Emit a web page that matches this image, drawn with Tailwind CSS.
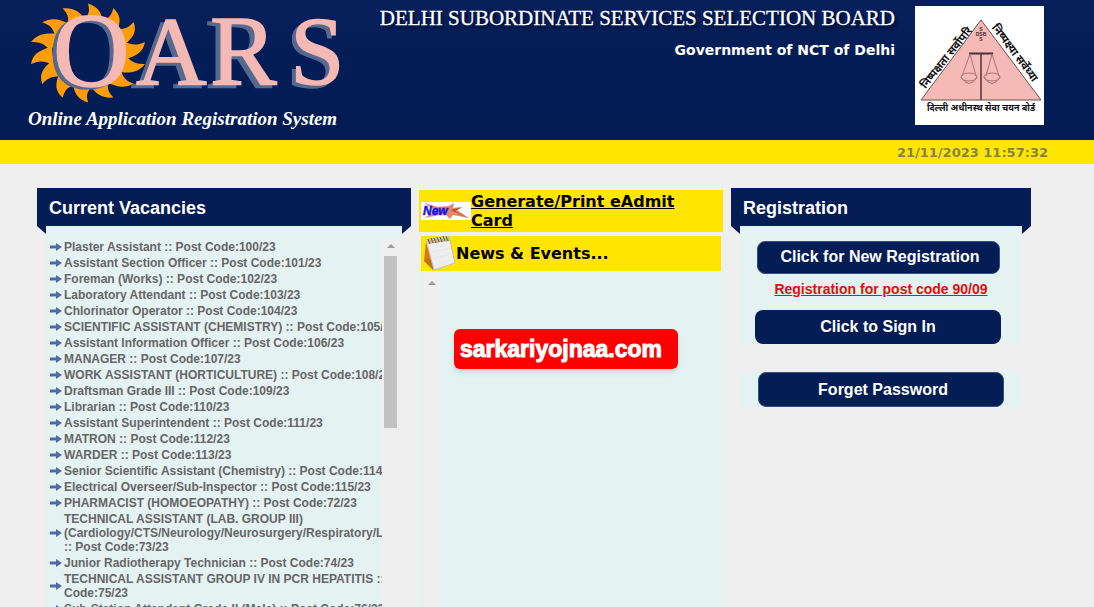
<!DOCTYPE html>
<html lang="en">
<head>
  <meta charset="UTF-8" />
  <meta name="viewport" content="width=device-width, initial-scale=1.0"/>
  <title>OARS - Delhi Subordinate Services Selection Board</title>
  <script src="https://cdn.jsdelivr.net/npm/@tailwindcss/browser@4"></script>
</head>
<body class="bg-[#efefef] font-['Liberation_Sans',sans-serif] h-screen overflow-hidden flex flex-col">

  <header class="shrink-0 h-[140px] bg-linear-to-b from-[#071f5a] to-[#021b53] text-white flex justify-between pr-[50px]">
    <div class="shrink-0">
      <svg class="block" width="360" height="107" viewBox="0 0 360 107" role="img" aria-label="OARS">
        <defs>
          <path id="ray" d="M-9 -30 C-6 -37 -3 -40 -7 -49 C2 -47 6 -42 9 -30 Z" />
        </defs>
        <g id="sun" fill="#ff9c0a" transform="translate(88 53) scale(1.18 1)"></g>
        <ellipse cx="90" cy="53" rx="34" ry="32" fill="#051d57" />
        <g font-family="Liberation Serif, serif" font-size="98" stroke-width="1.5">
          <g fill="#56698f" stroke="#56698f">
            <text x="49" y="88" font-size="106">O</text>
            <text x="131" y="87">A</text>
            <text x="205" y="87" font-size="100">R</text>
            <text x="286" y="87">S</text>
          </g>
          <g fill="#f5b9b4" stroke="#f5b9b4">
            <text x="53" y="86" font-size="106">O</text>
            <text x="136" y="84">A</text>
            <text x="210" y="84" font-size="100">R</text>
            <text x="290" y="84">S</text>
          </g>
        </g>
      </svg>
      <p class="pl-7 font-['Liberation_Serif',serif] font-bold italic text-[19px] leading-6">Online Application Registration System</p>
    </div>
    <div class="flex gap-5">
      <div class="text-right whitespace-nowrap pt-1">
        <h1 class="font-['Liberation_Serif',serif] text-[21px] leading-7 text-shadow-[2px_3px_3px_#000a30] [-webkit-text-stroke:0.3px_white]">DELHI SUBORDINATE SERVICES SELECTION BOARD</h1>
        <p class="font-['DejaVu_Sans',sans-serif] font-bold text-sm leading-9">Government of NCT of Delhi</p>
      </div>
      <svg class="mt-1.5 shrink-0" width="129" height="119" viewBox="0 0 129 119" role="img" aria-label="DSSSB emblem">
        <rect width="129" height="119" fill="#fff" />
        <path d="M66 14 L6 94 H126 Z" fill="#f5b9b6" stroke="#6d4c4c" />
        <path d="M54 47.500 H78" stroke="#4b3333" stroke-width="2" />
        <path d="M66 47 V94" stroke="#4b3333" stroke-width="1.500" />
        <g fill="none" stroke="#a87777">
          <path d="M55 48 L47 70 M55 48 L61 70 M77 48 L71 70 M77 48 L84 70" />
          <ellipse cx="54" cy="71" rx="8" ry="4" />
          <ellipse cx="77" cy="71" rx="8" ry="4" />
          <path d="M46 71 Q54 84 62 71 M69 71 Q77 84 85 71" />
        </g>
        <g fill="#4b2a2a" font-family="Liberation Sans, sans-serif" font-size="5" font-weight="bold" text-anchor="middle">
          <text x="66" y="25">S</text>
          <text x="66" y="30">DSB</text>
          <text x="66" y="35">S</text>
        </g>
        <g fill="#111" font-family="Noto Sans, Noto Sans Devanagari, sans-serif" font-weight="bold" text-anchor="middle">
          <text font-size="11" transform="translate(34 54) rotate(-51)">निष्पक्षता सर्वोपरि</text>
          <text font-size="11" transform="translate(97 49) rotate(53)">निष्पक्ष्या सर्वेध्या</text>
          <text x="66" y="105" font-size="9">दिल्ली अधीनस्थ सेवा चयन बोर्ड</text>
        </g>
      </svg>
    </div>
  </header>

  <div class="shrink-0 h-6 bg-[#ffe600] text-right pr-[46px] font-['DejaVu_Sans',sans-serif] font-bold text-[13px] leading-[26px] text-[#858249]">
    <time>21/11/2023 11:57:32</time>
  </div>

  <main class="flex-1 min-h-0 flex gap-2 pt-6 pl-[37px] pr-[63px]">

    <section class="flex-[374] min-w-0 flex flex-col">
      <h2 class="shrink-0 h-[38px] bg-[#041d55] text-white font-bold text-lg leading-[40px] pl-3">Current Vacancies</h2>
      <div class="flex-1 min-h-0 flex">
        <svg class="shrink-0" width="9" height="8"><path d="M0 0 H9 V8 Z" fill="#041d55" /></svg>
        <div class="flex-1 min-w-0 bg-[#e4f2f2] pt-[13px] flex">
          <ul id="vacancies" class="flex-1 min-w-0 overflow-hidden pl-1 text-xs leading-[14px] font-bold text-[#666] whitespace-nowrap"></ul>
          <div class="w-5 bg-[#efefef] px-0.5 pt-[5px] flex flex-col items-start">
            <svg class="ml-[3px] shrink-0" width="8" height="4"><path d="M4 0 L8 4 H0 Z" fill="#9d9d9d" /></svg>
            <div class="mt-2 w-[13px] h-[172px] bg-[#c1c1c1]"></div>
          </div>
        </div>
        <svg class="shrink-0" width="9" height="8"><path d="M0 0 H9 L0 8 Z" fill="#041d55" /></svg>
      </div>
    </section>

    <section class="flex-[304] min-w-0 flex flex-col pt-0.5 font-['DejaVu_Sans',sans-serif] font-bold">
      <div class="shrink-0 h-[42px] bg-[#ffe600] flex items-center pl-0.5">
        <svg class="shrink-0" width="50" height="18" viewBox="0 0 50 18">
          <rect width="50" height="18" fill="#fff" />
          <path d="M3 1 L17 5 L28 4 L33 1 L32 6 L40 5 L36 8 L48 16 L32 13 L29 17 L24 12 L3 16 L15 9 Z" fill="#e48668" />
          <path d="M42 5 L30 8 L48 17 L34 9 Z" fill="#b9452b" />
          <text x="2" y="13" font-family="Liberation Sans, sans-serif" font-size="12" font-weight="bold" font-style="italic" fill="#1414e8" stroke="#1414e8" stroke-width="0.5">New</text>
        </svg>
        <a href="#" class="text-base leading-[19px] underline">Generate/Print eAdmit<br>Card</a>
      </div>
      <div class="shrink-0 mt-1 mx-0.5 h-[35px] bg-[#ffe600] flex items-center">
        <svg class="shrink-0" width="35" height="35" viewBox="0 0 35 35">
          <path d="M5 5 L3 25 L12 29 Z" fill="#d97a16" />
          <path d="M3 25 L12 34 L14 30 L8 22 Z" fill="#bb701c" />
          <path d="M5 4 L28 0 L34 27 L13 34 Z" fill="#eee" stroke="#c7bfae" />
          <path d="M6 4 L28 1 L29 5 L7 8 Z" fill="#c9b792" />
          <path d="M7 3 l2 5 M10 2 l2 5 M13 2 l2 5 M16 1 l2 5 M19 1 l2 5 M22 0 l2 5 M25 0 l2 5" stroke="#6d5636" />
          <path d="M11 16 L29 12 M13 22 L30 18" stroke="#e6e6e6" />
        </svg>
        <h2 class="text-base">News &amp; Events...</h2>
      </div>
      <div class="flex-1 mx-0.5 bg-[#e4f2f2] flex">
        <div class="ml-[3px] w-4 bg-[#efefef] pt-2.5 flex justify-center">
          <svg width="8" height="4"><path d="M4 0 L8 4 H0 Z" fill="#9d9d9d" /></svg>
        </div>
        <div class="flex-1 pt-[58px] pl-3.5">
          <p class="w-56 h-10 rounded-md bg-[#fe0000] shadow-md text-white text-center pr-2.5 font-['Liberation_Sans',sans-serif] text-[23px] leading-10 [-webkit-text-stroke:1px_white]">sarkariyojnaa.com</p>
        </div>
      </div>
    </section>

    <section class="flex-[300] min-w-0">
      <h2 class="h-[38px] bg-[#041d55] text-white font-bold text-lg leading-[40px] pl-3">Registration</h2>
      <div class="flex items-start">
        <svg class="shrink-0" width="9" height="8"><path d="M0 0 H9 V8 Z" fill="#041d55" /></svg>
        <div class="flex-1 min-w-0 font-bold text-base text-white">
          <div class="bg-[#e4f2f2] pt-[15px] flex flex-col items-center">
            <button class="mr-1.5 w-[243px] h-[33px] rounded-lg bg-[#041d55] border border-[#38507e] pl-1 pb-0.5">Click for New Registration</button>
            <a href="#" class="text-sm leading-[30px] text-[#e60b12] underline">Registration for post code 90/09</a>
            <button class="mt-1.5 mr-1.5 w-[246px] h-[34px] rounded-lg bg-[#041d55]">Click to Sign In</button>
          </div>
          <div class="mt-7 bg-[#e4f2f2] flex justify-center">
            <button class="w-[246px] h-[35px] rounded-lg bg-[#041d55] border border-[#38507e] pl-1">Forget Password</button>
          </div>
        </div>
        <svg class="shrink-0" width="9" height="8"><path d="M0 0 H9 L0 8 Z" fill="#041d55" /></svg>
      </div>
    </section>

  </main>

  <script>
    const vacancies = [
      "Plaster Assistant :: Post Code:100/23",
      "Assistant Section Officer :: Post Code:101/23",
      "Foreman (Works) :: Post Code:102/23",
      "Laboratory Attendant :: Post Code:103/23",
      "Chlorinator Operator :: Post Code:104/23",
      "SCIENTIFIC ASSISTANT (CHEMISTRY) :: Post Code:105/23",
      "Assistant Information Officer :: Post Code:106/23",
      "MANAGER :: Post Code:107/23",
      "WORK ASSISTANT (HORTICULTURE) :: Post Code:108/23",
      "Draftsman Grade III :: Post Code:109/23",
      "Librarian :: Post Code:110/23",
      "Assistant Superintendent :: Post Code:111/23",
      "MATRON :: Post Code:112/23",
      "WARDER :: Post Code:113/23",
      "Senior Scientific Assistant (Chemistry) :: Post Code:114/23",
      "Electrical Overseer/Sub-Inspector :: Post Code:115/23",
      "PHARMACIST (HOMOEOPATHY) :: Post Code:72/23",
      "TECHNICAL ASSISTANT (LAB. GROUP III)<br>(Cardiology/CTS/Neurology/Neurosurgery/Respiratory/Lab)<br>:: Post Code:73/23",
      "Junior Radiotherapy Technician :: Post Code:74/23",
      "TECHNICAL ASSISTANT GROUP IV IN PCR HEPATITIS :: Post<br>Code:75/23",
      "Sub-Station Attendant Grade II (Male) :: Post Code:76/23"
    ];

    document.getElementById("vacancies").innerHTML = vacancies.map((name) => `
      <li class="flex items-center gap-0.5 py-px">
        <svg class="shrink-0" width="12" height="8" viewBox="0 0 12 8"><path d="M0 2.500 H6 V0 L12 4 L6 8 V5.500 H0 Z" fill="#4d6ca3" /></svg>
        <a href="#">${name}</a>
      </li>`).join("");

    // Sun rays around the O
    let rays = "";
    for (let i = 0; i < 14; i++) {
      rays += `<use href="#ray" transform="rotate(${i * 360 / 14 + 8})" />`;
    }
    document.getElementById("sun").innerHTML = rays;
  </script>
</body>
</html>
